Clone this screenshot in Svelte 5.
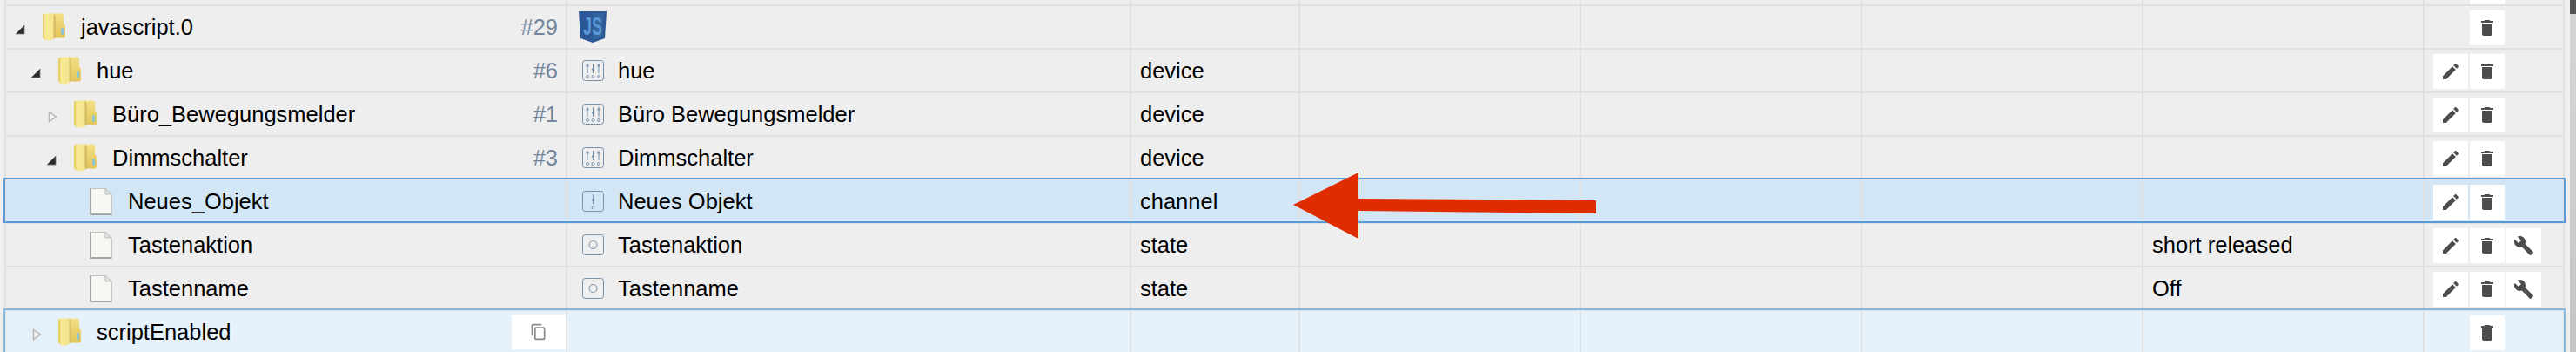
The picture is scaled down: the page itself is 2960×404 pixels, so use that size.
<script>
	const rows = [
		{ id: "top", stub: true },
		{ id: "javascript.0", level: 0, open: true, count: "#29", logo: true, del: true },
		{ id: "hue", level: 1, open: true, count: "#6", icon: "device", name: "hue", type: "device", edit: true, del: true },
		{ id: "Büro_Bewegungsmelder", level: 2, open: false, count: "#1", icon: "device", name: "Büro Bewegungsmelder", type: "device", edit: true, del: true },
		{ id: "Dimmschalter", level: 2, open: true, count: "#3", icon: "device", name: "Dimmschalter", type: "device", edit: true, del: true },
		{ id: "Neues_Objekt", level: 3, file: true, icon: "channel", name: "Neues Objekt", type: "channel", edit: true, del: true, selected: true },
		{ id: "Tastenaktion", level: 3, file: true, icon: "state", name: "Tastenaktion", type: "state", value: "short released", edit: true, del: true, tool: true },
		{ id: "Tastenname", level: 3, file: true, icon: "state", name: "Tastenname", type: "state", value: "Off", edit: true, del: true, tool: true },
		{ id: "scriptEnabled", level: 1, open: false, copy: true, del: true, hover: true }
	];
</script>

<svg class="defs" width="0" height="0" aria-hidden="true">
	<defs>
		<linearGradient id="folderFront" x1="0" x2="1" y1="0" y2="0">
			<stop offset="0" stop-color="#e2c654" />
			<stop offset="0.25" stop-color="#f8ea96" />
			<stop offset="0.8" stop-color="#f6e58e" />
			<stop offset="1" stop-color="#c4a650" />
		</linearGradient>
		<linearGradient id="folderBack" x1="0" x2="0" y1="0" y2="1">
			<stop offset="0" stop-color="#f3df84" />
			<stop offset="1" stop-color="#e2c45a" />
		</linearGradient>
	</defs>
</svg>

{#snippet folder()}
	<svg class="node" width="27" height="32" viewBox="0 0 27 32">
		<path d="M10 0h12q3 0 3 3v9l2 2v12q0 3-3 3H10z" fill="url(#folderBack)" />
		<path d="M3 0h8q3 0 4 3v25q0 2-2 2l-4 2H6q-5 0-6-4V3q0-3 3-3z" fill="url(#folderFront)" />
		<rect x="22" y="17" width="3" height="8" rx="1.500" fill="#86c4d8" />
	</svg>
{/snippet}

{#snippet file()}
	<svg class="node" width="26" height="32" viewBox="0 0 26 32">
		<path d="M1 1h17l7 7v23H1z" fill="#f5f7f3" />
		<path d="M18 1.500H1.500" fill="none" stroke="#c4c4c4" stroke-width="1" />
		<path d="M18 1l7 7h-7z" fill="#e2e2dc" stroke="#bdbdbd" stroke-width="1" />
		<path d="M1 1v30h24.500" fill="none" stroke="#a6a6a2" stroke-width="2" />
		<path d="M25.500 8v22" fill="none" stroke="#c6c6c2" stroke-width="1" />
	</svg>
{/snippet}

{#snippet typeIcon(kind)}
	<svg class="type" width="25" height="24" viewBox="0 0 25 24" fill="none" stroke="#7790ab" stroke-width="1">
		<rect x="0.500" y="0.500" width="24" height="23" rx="3" />
		{#if kind === "device"}
			<path d="M6 4v11M12.500 4v11M19 4v11" />
			<path d="M4.500 6.500h3M11 10.500h3M17.500 6.500h3" stroke-width="2" />
			<circle cx="6" cy="19" r="1.500" />
			<circle cx="12.500" cy="19" r="1.500" />
			<circle cx="19" cy="19" r="1.500" />
		{:else if kind === "channel"}
			<path d="M12.500 4v11" />
			<path d="M11 10.500h3" stroke-width="2" />
			<circle cx="12.500" cy="19" r="1.500" />
		{:else}
			<circle cx="12.500" cy="12" r="4.500" />
		{/if}
	</svg>
{/snippet}

{#snippet jsLogo()}
	<svg class="logo" width="32" height="36" viewBox="0 0 32 36">
		<path d="M0 0h32l-2 31-14 5-14-5z" fill="#2b5797" />
		<path d="M16 2h13l-2 27-11 4z" fill="#33669f" />
		<text transform="translate(16 27) scale(0.6 1)" text-anchor="middle">JS</text>
	</svg>
{/snippet}

<div class="page">
	<div class="tree">
		{#each rows as r (r.id)}
			<div class="row" class:stub={r.stub} class:selected={r.selected} class:hover={r.hover}>
				{#if r.stub}
					<div class="cell"></div>
					<div class="cell"></div>
					<div class="cell"></div>
					<div class="cell"></div>
					<div class="cell"></div>
					<div class="cell"></div>
					<div class="cell"></div>
					<div class="cell actions"><span class="btn ghost"></span><span class="btn"></span></div>
				{:else}
					<div class="cell id" style="padding-left: {10 + 18 * r.level}px">
						<span class="toggle">
							{#if r.open === true}
								<svg width="12" height="12" viewBox="0 0 12 12"><path d="M11 1v10H1z" fill="#2b2b2b" stroke="#777" stroke-width="0.800" /></svg>
							{:else if r.open === false}
								<svg class="closed" width="11" height="14" viewBox="0 0 11 14"><path d="M1.500 1.500l8 5.500-8 5.500z" fill="#f4f4f4" stroke="#b5b5b5" stroke-width="1.500" /></svg>
							{/if}
						</span>
						{#if r.file}
							{@render file()}
						{:else}
							{@render folder()}
						{/if}
						<span class="label">{r.id}</span>
						{#if r.count}
							<span class="count">{r.count}</span>
						{/if}
						{#if r.copy}
							<span class="btn copy">
								<svg width="20" height="20" viewBox="0 0 24 24"><path d="M16 1H4c-1.100 0-2 .9-2 2v14h2V3h12V1zm3 4H8c-1.100 0-2 .9-2 2v14c0 1.100.9 2 2 2h11c1.100 0 2-.9 2-2V7c0-1.100-.9-2-2-2zm0 16H8V7h11v14z" /></svg>
							</span>
						{/if}
					</div>
					<div class="cell name">
						{#if r.logo}
							{@render jsLogo()}
						{:else if r.icon}
							{@render typeIcon(r.icon)}
						{/if}
						{#if r.name}<span>{r.name}</span>{/if}
					</div>
					<div class="cell text">{r.type ?? ""}</div>
					<div class="cell"></div>
					<div class="cell"></div>
					<div class="cell"></div>
					<div class="cell text">{r.value ?? ""}</div>
					<div class="cell actions">
						<span class="btn" class:ghost={!r.edit}>
							{#if r.edit}
								<svg width="24" height="24" viewBox="0 0 24 24"><path d="M3 17.250V21h3.750L17.810 9.940l-3.750-3.750L3 17.250zM20.710 7.040c.39-.39.39-1.020 0-1.410l-2.340-2.340c-.39-.39-1.020-.39-1.410 0l-1.830 1.830 3.750 3.750 1.830-1.830z" /></svg>
							{/if}
						</span>
						<span class="btn">
							<svg width="24" height="24" viewBox="0 0 24 24"><path d="M6 19c0 1.100.9 2 2 2h8c1.100 0 2-.9 2-2V7H6v12zM19 4h-3.500l-1-1h-5l-1 1H5v2h14V4z" /></svg>
						</span>
						{#if r.tool}
							<span class="btn">
								<svg width="24" height="24" viewBox="0 0 24 24"><path d="M22.700 19l-9.100-9.100c.9-2.300.4-5-1.500-6.900-2-2-5-2.400-7.400-1.300L9 6 6 9 1.600 4.700C.4 7.100.9 10.100 2.900 12.100c1.900 1.900 4.600 2.400 6.900 1.500l9.100 9.100c.4.400 1 .4 1.400 0l2.300-2.300c.5-.4.5-1.100.1-1.400z" /></svg>
							</span>
						{/if}
					</div>
				{/if}
			</div>
		{/each}
		<svg class="arrow" width="350" height="76" viewBox="0 0 350 76">
			<path d="M0 37L75 0v30l273 2v15L75 44v32z" fill="#e02d00" />
		</svg>
	</div>
	<div class="scrollbar"><div class="thumb"></div></div>
</div>

<style>
	:global(body) {
		background: #efefef;
		overflow: hidden;
	}

	.defs {
		position: absolute;
	}

	.page {
		display: flex;
		justify-content: space-between;
		width: 2960px;
		height: 404px;
		overflow: hidden;
		font-family: "Liberation Sans", Arial, sans-serif;
		font-size: 25.500px;
		color: #000;
	}

	.tree {
		position: relative;
		width: 2942px;
		margin-left: 5px;
		flex: none;
	}

	.row {
		position: relative;
		display: grid;
		grid-template-columns: 645px 648px 194px 323px 323px 323px 323px 161px;
		height: 50px;
		box-sizing: border-box;
		border-left: 2px solid #e0e0e0;
		border-right: 2px solid #e0e0e0;
		border-bottom: 2px solid #e0e0e0;
		background: #eee;
	}

	.row.stub {
		height: 7px;
	}

	.row.selected {
		background: #d3e6f5;
	}

	.row.hover {
		background: #e6f2fb;
	}

	.row.selected::after,
	.row.hover::after {
		content: "";
		position: absolute;
		top: -3px;
		left: -3px;
		right: -3px;
		bottom: -1px;
		border: 2px solid #5b9bd5;
		pointer-events: none;
	}

	.row.hover::after {
		border-color: #85bae2;
		bottom: -20px;
	}

	.cell {
		display: flex;
		align-items: center;
		box-sizing: border-box;
		min-width: 0;
		border-right: 2px solid #e0e0e0;
		white-space: nowrap;
	}

	.cell:last-child {
		border-right: 0;
	}

	.toggle {
		display: flex;
		flex: none;
		width: 32px;
		margin-top: 5px;
	}

	.closed {
		margin-left: 2px;
	}

	.node {
		flex: none;
		width: 26px;
		margin-right: 18px;
	}

	.count {
		margin-left: auto;
		padding-right: 9px;
		color: #75869c;
	}

	.name {
		padding-left: 17px;
	}

	.type {
		flex: none;
		margin-right: 16px;
	}

	.logo {
		flex: none;
		margin-left: -4px;
	}

	.logo text {
		font-family: "Liberation Sans", Arial, sans-serif;
		font-size: 30px;
		font-weight: 700;
		fill: #5a97d8;
	}

	.text {
		padding-left: 10px;
	}

	.actions {
		align-items: flex-start;
		gap: 2px;
		padding: 5px 0 0 10px;
		overflow: hidden;
	}

	.btn {
		display: flex;
		flex: none;
		align-items: center;
		justify-content: center;
		width: 40px;
		height: 40px;
		background: #fff;
	}

	.btn.ghost {
		background: none;
	}

	.btn svg {
		fill: #4d4d4d;
	}

	.btn.copy {
		margin-left: auto;
		width: 62px;
	}

	.btn.copy svg {
		fill: #8a8a8a;
	}

	.stub .actions {
		padding-top: 0;
	}

	.arrow {
		position: absolute;
		left: 1481px;
		top: 198px;
		z-index: 2;
	}

	.scrollbar {
		flex: none;
		width: 7px;
		background: linear-gradient(#d6d6d6, #c4c4c4);
	}

	.thumb {
		height: 16px;
		background: #555;
	}
</style>
